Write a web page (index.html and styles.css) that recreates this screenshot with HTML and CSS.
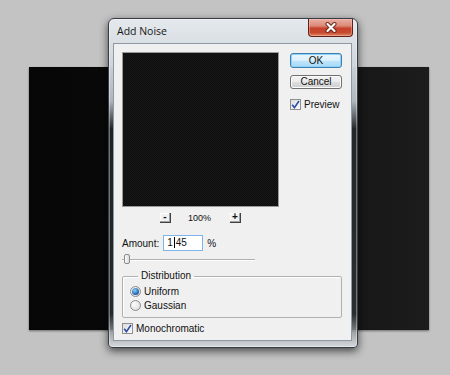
FILE: index.html
```html
<!DOCTYPE html>
<html lang="en">

<head>
    <meta charset="UTF-8">
    <meta name="viewport" content="width=device-width, initial-scale=1.0">
    <title>Add Noise</title>
    <link rel="stylesheet" href="styles.css">
</head>

<body>
    <div class="canvas"></div>

    <div class="window">
        <div class="titlebar">
            <span class="title">Add Noise</span>
            <div class="close">
                <svg width="14" height="11" viewBox="0 0 14 11">
                    <path d="M3.5 2 L10.5 9 M10.5 2 L3.5 9" stroke="#6a2418" stroke-width="4" stroke-linecap="round" />
                    <path d="M3.5 2 L10.5 9 M10.5 2 L3.5 9" stroke="#fff" stroke-width="2.2" stroke-linecap="round" />
                </svg>
            </div>
        </div>

        <div class="client">
            <div class="top-row">
                <div class="preview-col">
                    <div class="preview"></div>
                    <div class="zoom-row">
                        <div class="zoom-btn">-</div>
                        <span class="zoom-value">100%</span>
                        <div class="zoom-btn">+</div>
                    </div>
                </div>
                <div class="buttons">
                    <div class="btn btn-default">OK</div>
                    <div class="btn btn-cancel">Cancel</div>
                    <label class="check-row">
                        <span class="checkbox">
                            <svg width="9" height="9" viewBox="0 0 9 9">
                                <path d="M1.2 4.8 L3.4 7.6 L8 1" fill="none" stroke="#2b4ea8" stroke-width="1.6" />
                            </svg>
                        </span>
                        Preview
                    </label>
                </div>
            </div>

            <div class="amount-row">
                <span>Amount:</span>
                <div class="input">1<span class="caret"></span>45</div>
                <span>%</span>
            </div>

            <div class="slider">
                <div class="track"></div>
                <div class="thumb"></div>
            </div>

            <fieldset class="group">
                <legend>Distribution</legend>
                <div class="radio-row">
                    <span class="radio checked"></span>
                    Uniform
                </div>
                <div class="radio-row">
                    <span class="radio"></span>
                    Gaussian
                </div>
            </fieldset>

            <label class="check-row mono">
                <span class="checkbox">
                    <svg width="9" height="9" viewBox="0 0 9 9">
                        <path d="M1.2 4.8 L3.4 7.6 L8 1" fill="none" stroke="#2b4ea8" stroke-width="1.6" />
                    </svg>
                </span>
                Monochromatic
            </label>
        </div>
    </div>
</body>

</html>
```

FILE: styles.css
```css
body {
    margin: 0;
    width: 450px;
    height: 375px;
    overflow: hidden;
    position: relative;
    background: #c3c3c3;
    font-family: "Liberation Sans", Arial, sans-serif;
    font-size: 10px;
    color: #111;
}

/* document behind the dialog */
.canvas {
    position: absolute;
    left: 29px;
    top: 67px;
    width: 400px;
    height: 263px;
    background: linear-gradient(90deg, #060606, #0c0c0c 40%, #1c1c1c);
    box-shadow: 0 1px 2px rgba(0, 0, 0, 0.45);
}

.window {
    position: absolute;
    left: 108px;
    top: 18px;
    width: 250px;
    box-sizing: border-box;
    padding: 0 5px 6px 4px;
    border: 1px solid #363d46;
    border-radius: 6px 6px 4px 4px;
    background: linear-gradient(180deg,
            rgba(230, 234, 238, 0.98) 0,
            rgba(206, 213, 220, 0.96) 50px,
            rgba(188, 196, 204, 0.92) 82px,
            rgba(40, 44, 48, 0.72) 110px,
            rgba(50, 54, 58, 0.7) 295px,
            rgba(215, 219, 223, 0.92) 100%);
    box-shadow: inset 0 0 0 1px rgba(255, 255, 255, 0.35), 0 3px 9px rgba(0, 0, 0, 0.65);
}

.titlebar {
    height: 24px;
    display: flex;
    justify-content: space-between;
    align-items: flex-start;
}

.title {
    font-family: "Open Sans", "Liberation Sans", sans-serif;
    font-size: 10.5px;
    color: #151515;
    margin: 5px 0 0 4px;
}

.close {
    width: 45px;
    height: 18px;
    box-sizing: border-box;
    margin-right: -1px;
    border: 1px solid #5e2218;
    border-top: none;
    border-radius: 0 0 4px 4px;
    background: linear-gradient(180deg, #eab0a4 0, #dc8a78 40%, #c7412b 55%, #c64a30 80%, #e08a66 100%);
    box-shadow: inset 0 0 0 1px rgba(255, 200, 190, 0.4);
    display: flex;
    justify-content: center;
    align-items: center;
}

.client {
    background: #f0f0f0;
    border: 1px solid #8e99a4;
    padding: 8px 8px 6px 8px;
}

.top-row {
    display: flex;
}

.preview-col {
    width: 157px;
}

.preview {
    width: 157px;
    height: 155px;
    box-sizing: border-box;
    border: 1px solid #9a9a9a;
    background: repeating-conic-gradient(#161616 0 25%, #0f0f0f 0 50%) 0 0 / 2px 2px;
}

.zoom-row {
    margin-top: 6px;
    height: 10px;
    display: flex;
    justify-content: center;
    align-items: center;
}

.zoom-btn {
    width: 11px;
    height: 10px;
    box-sizing: border-box;
    border-right: 1px solid #404040;
    border-bottom: 1px solid #404040;
    box-shadow: inset -1px -1px 0 #a0a0a0, inset 1px 1px 0 #fff;
    font-size: 10px;
    font-weight: bold;
    line-height: 8px;
    text-align: center;
}

.zoom-value {
    font-size: 9px;
    margin: 0 19px 0 17px;
}

.buttons {
    margin-left: 11px;
    width: 52px;
    padding-top: 1px;
}

.btn {
    box-sizing: border-box;
    border-radius: 3px;
    text-align: center;
    font-size: 10px;
}

.btn-default {
    height: 15px;
    line-height: 13px;
    border: 1px solid #3c7fb1;
    background: linear-gradient(180deg, #eaf6fd 0, #d9f0fc 50%, #bee6fd 51%, #a7d9f5 100%);
    box-shadow: inset 0 0 0 1px #8ed3f7;
}

.btn-cancel {
    margin-top: 7px;
    height: 14px;
    line-height: 12px;
    border: 1px solid #707070;
    background: linear-gradient(180deg, #f2f2f2 0, #ebebeb 50%, #dddddd 51%, #cfcfcf 100%);
    box-shadow: inset 0 0 0 1px #fcfcfc;
}

.check-row {
    display: flex;
    align-items: center;
    gap: 3px;
}

.buttons .check-row {
    margin-top: 10px;
}

.checkbox {
    width: 11px;
    height: 11px;
    box-sizing: border-box;
    border: 1px solid #8f8f8f;
    background: linear-gradient(135deg, #dcdcdc, #fdfdfd);
    display: flex;
    justify-content: center;
    align-items: center;
}

.amount-row {
    margin-top: 12px;
    height: 16px;
    display: flex;
    align-items: center;
    gap: 4px;
}

.input {
    width: 40px;
    height: 16px;
    box-sizing: border-box;
    border: 1px solid #7eb4ea;
    background: #fff;
    padding-left: 3px;
    line-height: 14px;
}

.caret {
    display: inline-block;
    width: 1px;
    height: 11px;
    margin: 0 1px;
    background: #000;
    vertical-align: -2px;
}

.slider {
    margin-top: 3px;
    width: 133px;
    height: 10px;
    position: relative;
}

.track {
    position: relative;
    top: 5px;
    height: 1px;
    background: #b0b0b0;
    border-bottom: 1px solid #fff;
}

.thumb {
    position: absolute;
    left: 2px;
    top: 0;
    width: 6px;
    height: 10px;
    box-sizing: border-box;
    border: 1px solid #8a8a8a;
    border-radius: 2px;
    background: linear-gradient(90deg, #fafafa, #dcdcdc);
}

.group {
    margin: 6px 0 0 0;
    width: 220px;
    box-sizing: border-box;
    padding: 2px 6px 5px 7px;
    border: 1px solid #b0b0b0;
    border-radius: 2px;
    box-shadow: inset 1px 1px 0 #fff;
}

.group legend {
    padding: 0 3px;
    margin-left: 8px;
    line-height: 12px;
}

.radio-row {
    height: 14px;
    display: flex;
    align-items: center;
    gap: 3px;
}

.radio {
    width: 11px;
    height: 11px;
    box-sizing: border-box;
    border-radius: 50%;
    border: 1px solid #8a8a8a;
    background: radial-gradient(circle at 35% 35%, #fdfdfd, #d6d6d6);
    display: flex;
    justify-content: center;
    align-items: center;
}

.radio.checked::after {
    content: "";
    width: 7px;
    height: 7px;
    border-radius: 50%;
    background: radial-gradient(circle at 40% 35%, #8fd0f5, #1f63b4 65%, #0d3a78);
}

.mono {
    margin-top: 5px;
}
```
